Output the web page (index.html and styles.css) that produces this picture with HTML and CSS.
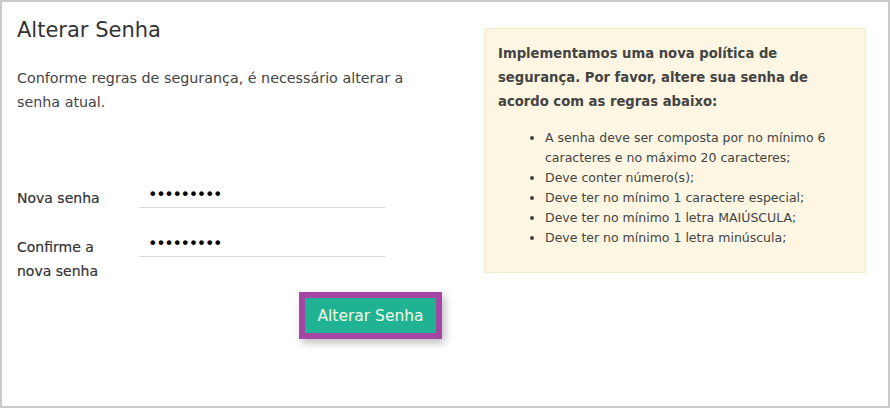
FILE: index.html
```html
<!DOCTYPE html>
<html lang="pt">
<head>
<meta charset="utf-8">
<link rel="stylesheet" href="styles.css">
</head>
<body>
<div class="frame">
  <div class="main">
    <h1 class="title">Alterar Senha</h1>
    <p class="intro">Conforme regras de segurança, é necessário alterar a senha atual.</p>
    <form class="form">
      <div class="row">
        <label class="label">Nova senha</label>
        <div class="field"><span class="dots">•••••••••</span></div>
      </div>
      <div class="row">
        <label class="label">Confirme a nova senha</label>
        <div class="field"><span class="dots">•••••••••</span></div>
      </div>
      <div class="actions">
        <button type="button" class="btn">Alterar Senha</button>
      </div>
    </form>
  </div>
  <aside class="notice">
    <p class="notice-title">Implementamos uma nova política de segurança. Por favor, altere sua senha de acordo com as regras abaixo:</p>
    <ul class="rules">
      <li>A senha deve ser composta por no mínimo 6 caracteres e no máximo 20 caracteres;</li>
      <li>Deve conter número(s);</li>
      <li>Deve ter no mínimo 1 caractere especial;</li>
      <li>Deve ter no mínimo 1 letra MAIÚSCULA;</li>
      <li>Deve ter no mínimo 1 letra minúscula;</li>
    </ul>
  </aside>
</div>
</body>
</html>
```
FILE: styles.css
```css
* { box-sizing: border-box; }
html, body { margin: 0; padding: 0; background: #fff; }
body { font-family: "DejaVu Sans", "Open Sans", sans-serif; color: #3a3a3a; }
.frame {
  width: 890px; height: 408px;
  border: 2px solid #cbcbcb;
  display: flex;
  align-items: flex-start;
}
.main { width: 482px; padding: 14px 0 0 15px; }
.title { margin: 0; font-size: 21px; font-weight: 400; line-height: 28px; color: #333; }
.intro { margin: 22px 0 0; width: 400px; font-size: 14.3px; line-height: 24px; color: #444; }
.form { margin-top: 72px; }
.row { display: flex; align-items: flex-start; margin-bottom: 1px; }
.label { width: 100px; margin-right: 22px; font-size: 14px; line-height: 24px; color: #333; -webkit-text-stroke: 0.2px #333; }
.field { width: 246px; height: 48px; padding: 2px 0 0 9px; position: relative; }
.field::after { content: ""; position: absolute; left: 0; right: 0; top: 21px; border-bottom: 1px solid #d8d8d8; }
.dots { font-size: 16px; line-height: 14px; letter-spacing: -1.3px; color: #000; display: block; }
.actions { display: flex; padding-left: 282px; margin-top: 9px; }
.btn {
  font-family: inherit;
  font-size: 15.5px;
  color: #f4fbe8;
  background: #1fb393;
  border: 6px solid #a347a3;
  width: 143px; height: 47px;
  padding: 0;
  box-shadow: 3px 4px 8px rgba(0,0,0,0.25);
  cursor: pointer;
}
.notice {
  margin-top: 26px;
  width: 382px; height: 245px;
  background: #fdf6e2;
  border: 1px solid #f6ebc9;
  padding: 13px 14px 0 13px;
}
.notice-title { margin: 0; font-size: 13.2px; font-weight: 700; line-height: 24px; color: #444; }
.rules { margin: 14px 0 0; padding-left: 47px; font-size: 12.5px; line-height: 20px; color: #444; }
.rules li { padding-left: 0; }
```
